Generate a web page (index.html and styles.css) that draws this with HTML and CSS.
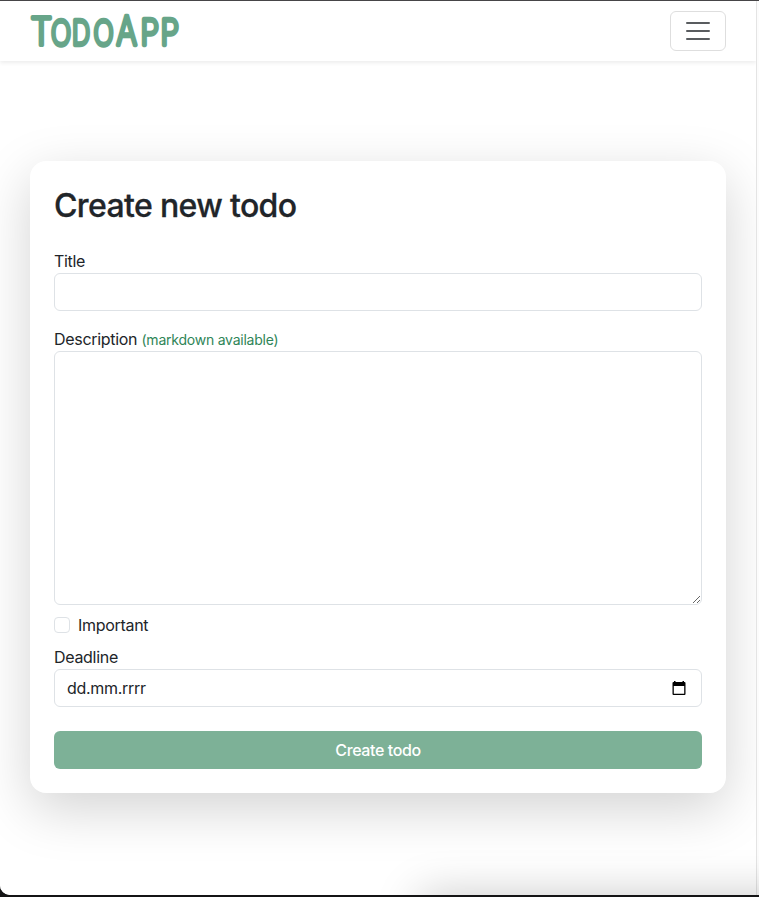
FILE: index.html
```html
<!DOCTYPE html>
<html lang="en">
<head>
<meta charset="utf-8">
<title>TodoApp</title>
<link rel="stylesheet" href="styles.css">
</head>
<body>
<div class="window">
  <div class="page">
    <header class="navbar">
      <svg class="logo" width="152" height="40" viewBox="0 0 152 40" role="img">
        <text transform="translate(1.6 33.8) scale(.96 1.05)">T</text>
        <text transform="translate(22 33.8) scale(.74 .95)">O</text>
        <text transform="translate(43 33.8) scale(.7 .96)">D</text>
        <text transform="translate(64.4 33.8) scale(.74 .95)">O</text>
        <text transform="translate(87.6 34) scale(.86 1.09)">A</text>
        <text transform="translate(111.5 33.8) scale(.83 .98)">P</text>
        <text transform="translate(131.4 33.8) scale(.83 .98)">P</text>
      </svg>
      <button class="toggler" type="button" aria-label="Menu">
        <svg width="30" height="30" viewBox="0 0 30 30"><path d="M4 7h22M4 15h22M4 23h22"/></svg>
      </button>
    </header>
    <form class="card">
      <h1>Create new todo</h1>
      <div class="field">
        <label for="title">Title</label>
        <input class="control" id="title" type="text">
      </div>
      <div class="field description">
        <label for="desc">Description <small>(markdown available)</small></label>
        <textarea class="control" id="desc"></textarea>
      </div>
      <label class="check"><input type="checkbox"><span>Important</span></label>
      <div class="field">
        <label>Deadline</label>
        <div class="control date">
          <span>dd.mm.rrrr</span>
          <svg width="14" height="15" viewBox="0 0 14 15"><path d="M2 0h1.5v1h7V0H12v1h.5q1 0 1 1v11q0 1-1 1h-11q-1 0-1-1V2q0-1 1-1H2zM1.8 5v7.7h10.4V5z" fill-rule="evenodd"/></svg>
        </div>
      </div>
      <button class="submit" type="button">Create todo</button>
    </form>
  </div>
  <div class="edge-shadow"></div>
</div>
</body>
</html>
```
FILE: styles.css
```css
* { box-sizing: border-box; }
html { background: #141415; }
body {
  margin: 0;
  height: 897px;
  overflow: hidden;
  border-top: 1px solid #464547;
  font: 400 16px/24px Inter, "Liberation Sans", sans-serif;
  letter-spacing: -0.3px;
  color: #212529;
}
.window {
  position: relative;
  height: 894px;
  overflow: hidden;
  background: #fcfcfc;
  border-bottom-left-radius: 10px;
}
.page {
  width: 757px;
  height: 894px;
  overflow: hidden;
  background: #fff;
  border-right: 1px solid #e4e4e4;
}
.navbar {
  display: flex;
  align-items: center;
  justify-content: space-between;
  height: 60px;
  padding: 0 30px 0 29px;
  box-shadow: 0 2px 4px rgba(0, 0, 0, .075);
}
.logo { display: block; overflow: visible; }
.logo text {
  font: 200 36px Inter, sans-serif;
  letter-spacing: 0;
  fill: #67a589;
  stroke: #67a589;
  stroke-width: 4;
  stroke-linejoin: round;
  vector-effect: non-scaling-stroke;
}
.toggler {
  display: flex;
  align-items: center;
  justify-content: center;
  width: 56px;
  height: 40px;
  padding: 0;
  background: none;
  border: 1px solid #dedede;
  border-radius: 6px;
}
.toggler path { stroke: #595c5f; stroke-width: 2; stroke-linecap: round; }
.card {
  margin: 100px 30px 0;
  height: 632px;
  padding: 24px;
  border-radius: 16px;
  background: #fff;
  box-shadow: 0 16px 54px rgba(0, 0, 0, .175);
}
h1 {
  margin: 0 0 24px;
  padding-top: 1px;
  height: 40px;
  font-size: 32px;
  line-height: 40px;
  font-weight: 500;
  letter-spacing: -0.64px;
  -webkit-text-stroke: .3px #212529;
}
.field { display: flex; flex-direction: column; margin-bottom: 16px; }
.field label { display: block; height: 24px; white-space: nowrap; }
small { font-size: 14px; color: #2f8558; letter-spacing: -0.23px; }
.control {
  display: block;
  width: 100%;
  height: 38px;
  margin: 0;
  padding: 6px 12px;
  border: 1px solid #dee2e6;
  border-radius: 6px;
  background: #fff;
}
textarea.control { height: 254px; }
.description { margin-bottom: 8px; }
.check { display: flex; align-items: center; gap: 8px; height: 24px; margin-bottom: 8px; }
.check input {
  appearance: none;
  width: 16px;
  height: 16px;
  margin: 0;
  border: 1px solid #dee2e6;
  border-radius: 4px;
}
.date { display: flex; align-items: center; justify-content: space-between; padding-right: 15px; }
.submit {
  display: block;
  width: 100%;
  height: 38px;
  margin-top: 24px;
  border: 0;
  border-radius: 6px;
  background: #7db197;
  color: #fff;
  font: inherit;
  font-weight: 500;
  letter-spacing: -0.4px;
}
.edge-shadow {
  position: absolute;
  left: 420px;
  right: -80px;
  bottom: -40px;
  height: 40px;
  box-shadow: 0 0 45px 0 rgba(0, 0, 0, .22);
}
```
